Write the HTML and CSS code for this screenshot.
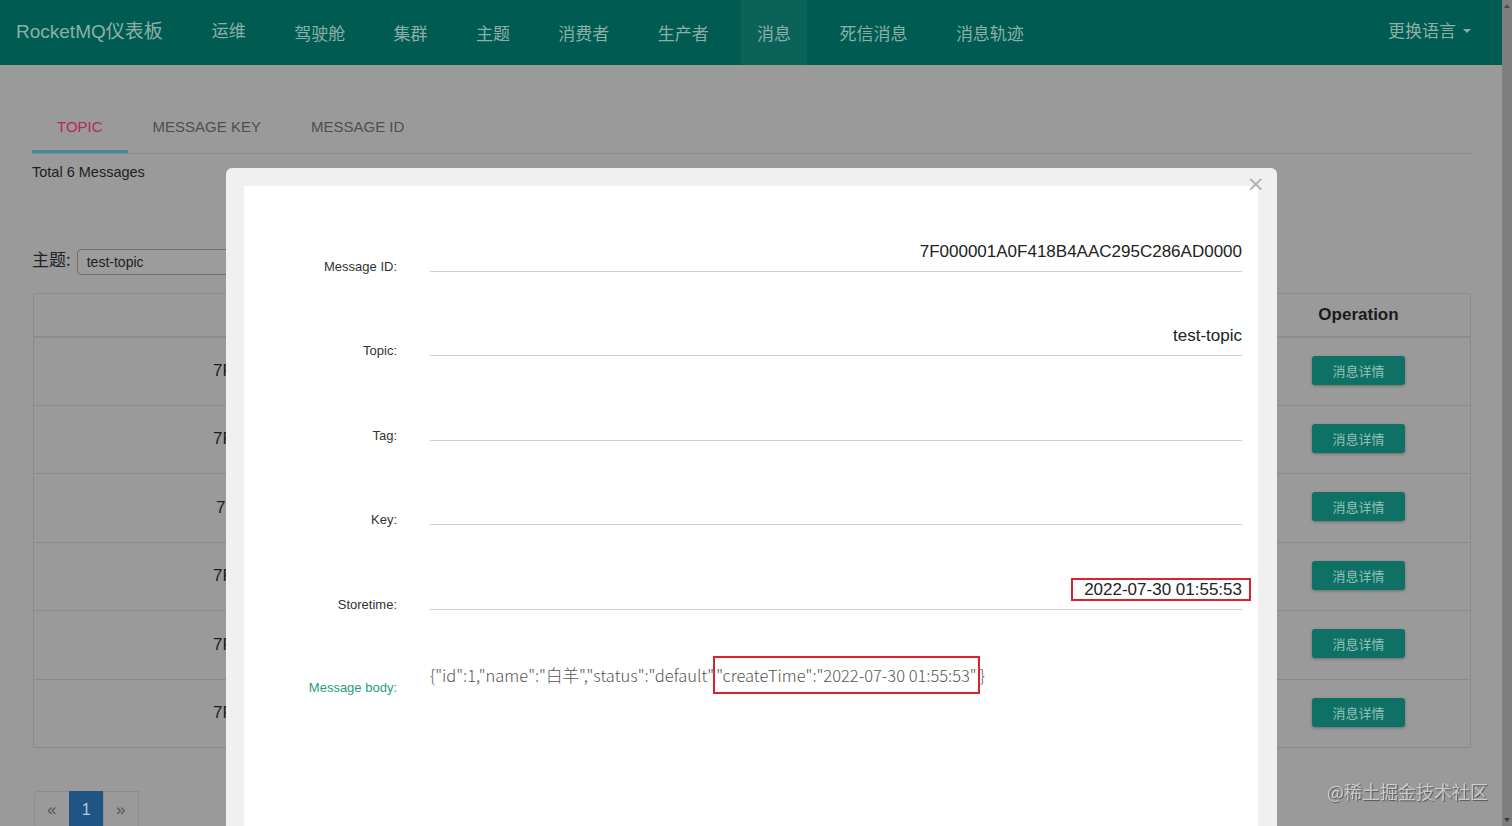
FILE: index.html
```html
<!DOCTYPE html>
<html>
<head>
<meta charset="utf-8">
<link rel="stylesheet" href="styles.css">
</head>
<body>
<div class="app">
  <div class="page">
    <header class="nav">
      <div class="brand">RocketMQ仪表板</div>
      <nav class="menu">
        <a class="item up">运维</a>
        <a class="item">驾驶舱</a>
        <a class="item">集群</a>
        <a class="item">主题</a>
        <a class="item">消费者</a>
        <a class="item">生产者</a>
        <a class="item active">消息</a>
        <a class="item">死信消息</a>
        <a class="item">消息轨迹</a>
      </nav>
      <div class="lang">更换语言<span class="caret"></span></div>
    </header>
    <main class="main">
      <div class="tabs">
        <a class="tab active">TOPIC</a>
        <a class="tab">MESSAGE KEY</a>
        <a class="tab">MESSAGE ID</a>
      </div>
      <div class="total">Total 6 Messages</div>
      <div class="filter">
        <span class="flabel">主题:</span>
        <div class="select">test-topic</div>
      </div>
      <div class="table">
        <div class="tr th"><div class="c-id"></div><div class="c-mid"></div><div class="c-op">Operation</div></div>
        <div class="tr"><div class="c-id"><span class="clip">7F</span></div><div class="c-mid"></div><div class="c-op"><span class="btn">消息详情</span></div></div>
        <div class="tr"><div class="c-id"><span class="clip">7F</span></div><div class="c-mid"></div><div class="c-op"><span class="btn">消息详情</span></div></div>
        <div class="tr"><div class="c-id"><span class="clip narrow">7</span></div><div class="c-mid"></div><div class="c-op"><span class="btn">消息详情</span></div></div>
        <div class="tr"><div class="c-id"><span class="clip">7F</span></div><div class="c-mid"></div><div class="c-op"><span class="btn">消息详情</span></div></div>
        <div class="tr"><div class="c-id"><span class="clip">7F</span></div><div class="c-mid"></div><div class="c-op"><span class="btn">消息详情</span></div></div>
        <div class="tr"><div class="c-id"><span class="clip">7F</span></div><div class="c-mid"></div><div class="c-op"><span class="btn">消息详情</span></div></div>
      </div>
      <div class="pager">
        <span class="pg first">«</span>
        <span class="pg cur">1</span>
        <span class="pg">»</span>
      </div>
    </main>
  </div>
  <div class="scrollbar"><span class="arr a-up"></span><span class="thumb"></span><span class="arr a-down"></span></div>
</div>

<div class="modal">
  <span class="close">×</span>
  <div class="panel">
    <div class="row">
      <div class="label">Message ID:</div>
      <div class="field">7F000001A0F418B4AAC295C286AD0000</div>
    </div>
    <div class="row">
      <div class="label">Topic:</div>
      <div class="field">test-topic</div>
    </div>
    <div class="row">
      <div class="label">Tag:</div>
      <div class="field"></div>
    </div>
    <div class="row">
      <div class="label">Key:</div>
      <div class="field"></div>
    </div>
    <div class="row">
      <div class="label">Storetime:</div>
      <div class="field"><span class="mark mark-time">2022-07-30 01:55:53</span></div>
    </div>
    <div class="row body-row">
      <div class="label green">Message body:</div>
      <div class="body-val">{"id":1,"name":"白羊","status":"default",<span class="mark mark-body">"createTime":"2022-07-30 01:55:53"</span>}</div>
    </div>
  </div>
</div>

<div class="watermark">@稀土掘金技术社区</div>
</body>
</html>
```

FILE: styles.css
```css
* { box-sizing: border-box; }
html, body { margin: 0; padding: 0; height: 100%; overflow: hidden; }
body {
  font-family: "Liberation Sans", Arial, "Noto Sans CJK SC", sans-serif;
  background: #9a9a9a;
  color: #1e1e1e;
}
.app { display: flex; height: 826px; }
.page { flex: 1; min-width: 0; }
.scrollbar {
  width: 10px;
  background: #7f7f7f;
  display: flex;
  flex-direction: column;
  align-items: center;
  justify-content: space-between;
  padding: 4px 0;
}
.arr { width: 0; height: 0; border-left: 3px solid transparent; border-right: 3px solid transparent; }
.a-up { border-bottom: 4px solid #4a4a4a; }
.a-down { border-top: 4px solid #3a3a3a; }
.thumb { flex: 1; }

/* NAV */
.nav {
  height: 65px;
  background: #005c52;
  display: flex;
  align-items: stretch;
  color: #8cafa8;
}
.brand {
  font-size: 19px;
  display: flex;
  align-items: center;
  padding: 0 33px 6px 16px;
}
.menu { display: flex; gap: 16.4px; }
.item {
  display: flex;
  align-items: center;
  padding: 0 16px;
  font-size: 17px;
  font-family: "Noto Sans CJK SC", sans-serif;
}
.item.up { padding: 0 16px 6px; }
.item.active { background: #0b6259; }
.lang {
  margin-left: auto;
  display: flex;
  align-items: center;
  padding: 0 31px 6px 0;
  font-size: 17px;
  font-family: "Noto Sans CJK SC", sans-serif;
}
.caret {
  display: inline-block;
  margin-left: 7px;
  margin-top: 2px;
  border-left: 4px solid transparent;
  border-right: 4px solid transparent;
  border-top: 4px solid #8cafa8;
}

/* MAIN */
.main { padding: 36px 31px 0 32px; }
.tabs { display: flex; border-bottom: 1px solid #8a8a8a; }
.tab {
  font-size: 15px;
  line-height: 20px;
  padding: 16px 25px 13px;
  color: #4e4e4e;
  border-bottom: 3px solid transparent;
}
.tab.active { color: #b52a52; border-bottom-color: #3a8ca0; }
.total { margin-top: 8px; font-size: 14.5px; line-height: 20px; color: #1e1e1e; }
.filter { margin-top: 67px; display: flex; align-items: center; gap: 6px; height: 26px; }
.flabel { font-size: 17px; font-family: "Noto Sans CJK SC", sans-serif; color: #222; padding-bottom: 7px; }
.select {
  width: 300px;
  height: 26px;
  border: 1px solid #6e6e6e;
  border-radius: 4px;
  font-size: 14px;
  line-height: 24px;
  padding-left: 9px;
  color: #1e1e1e;
  background: #9c9c9c;
}
.table { margin-top: 18px; margin-left: 1px; border: 1px solid #8a8a8a; border-top: 0; }
.tr { display: flex; height: 68.5px; border-top: 1px solid #8a8a8a; align-items: center; }
.tr.th { height: 44px; border-bottom: 1px solid #8c8c8c; }
.tr.th + .tr { border-top: 1px solid #8c8c8c; height: 67.5px; }
.c-id { width: 688px; font-size: 17px; color: #1e1e1e; white-space: nowrap; }
.clip { display: block; padding-left: 179px; }
.clip.narrow { padding-left: 182px; }
.c-mid { flex: 1; }
.c-op { width: 223px; display: flex; justify-content: center; font-weight: bold; font-size: 17px; color: #1a1a1a; }
.btn {
  width: 93px;
  height: 29px;
  background: #0f7166;
  color: #8fc2b6;
  font-weight: normal;
  font-size: 13px;
  font-family: "Noto Sans CJK SC", sans-serif;
  display: flex;
  align-items: center;
  justify-content: center;
  border-radius: 3px;
  box-shadow: 0 1px 3px rgba(0,0,0,0.3);
  margin-top: -2px;
}
.pager { margin-top: 43px; margin-left: 2px; display: flex; }
.pg {
  width: 35.5px;
  height: 38px;
  border: 1px solid #8c8c8c;
  margin-left: -1px;
  display: flex;
  align-items: center;
  justify-content: center;
  font-size: 17px;
  color: #555;
  padding-bottom: 0;
}
.pg.first { border-radius: 4px 0 0 4px; margin-left: 0; }
.pg.cur { background: #1e5585; border-color: #1e5585; color: #b9c7d6; font-size: 16px; }

/* MODAL */
.modal {
  position: fixed;
  left: 226px;
  top: 168px;
  width: 1051px;
  height: 720px;
  background: #f0f0f0;
  border-radius: 6px;
  padding: 18px 19px 0 18px;
}
.close {
  position: absolute;
  right: 12px;
  top: 1px;
  font-size: 22px;
  color: #b0b0b0;
  font-family: "DejaVu Sans", sans-serif;
  line-height: 30px;
}
.panel { background: #fff; height: 100%; padding: 1px 16px 0 0; }
.row { display: flex; align-items: flex-end; height: 84.5px; gap: 33px; }
.label {
  width: 153px;
  text-align: right;
  font-size: 13px;
  line-height: 14px;
  color: #333;
  margin-bottom: -2px;
}
.field {
  flex: 1;
  height: 32px;
  border-bottom: 1px solid #cfcfcf;
  text-align: right;
  font-size: 17px;
  line-height: 24px;
  color: #222;
  white-space: nowrap;
}
.mark { border: 2px solid #d9232e; }
.mark-time { display: inline-block; line-height: 19px; padding: 0 7px 0 11px; margin-right: -9px; margin-top: 0; }
.body-row { height: auto; margin-top: 52px; align-items: flex-start; }
.label.green { color: #1f9c84; padding-top: 19px; margin-bottom: 0; }
.body-val {
  font-family: "Noto Sans CJK SC", sans-serif;
  font-weight: 300;
  font-size: 16.5px;
  line-height: 26px;
  color: #555;
  white-space: nowrap;
}
.mark-body { padding: 5px 1px; margin-left: -3px; }

.watermark {
  position: fixed;
  right: 24px;
  bottom: 22px;
  font-size: 18px;
  font-family: "Noto Sans CJK SC", sans-serif;
  color: rgba(225,225,225,0.75);
  text-shadow: 1px 1px 1px rgba(0,0,0,0.45);
}
```
